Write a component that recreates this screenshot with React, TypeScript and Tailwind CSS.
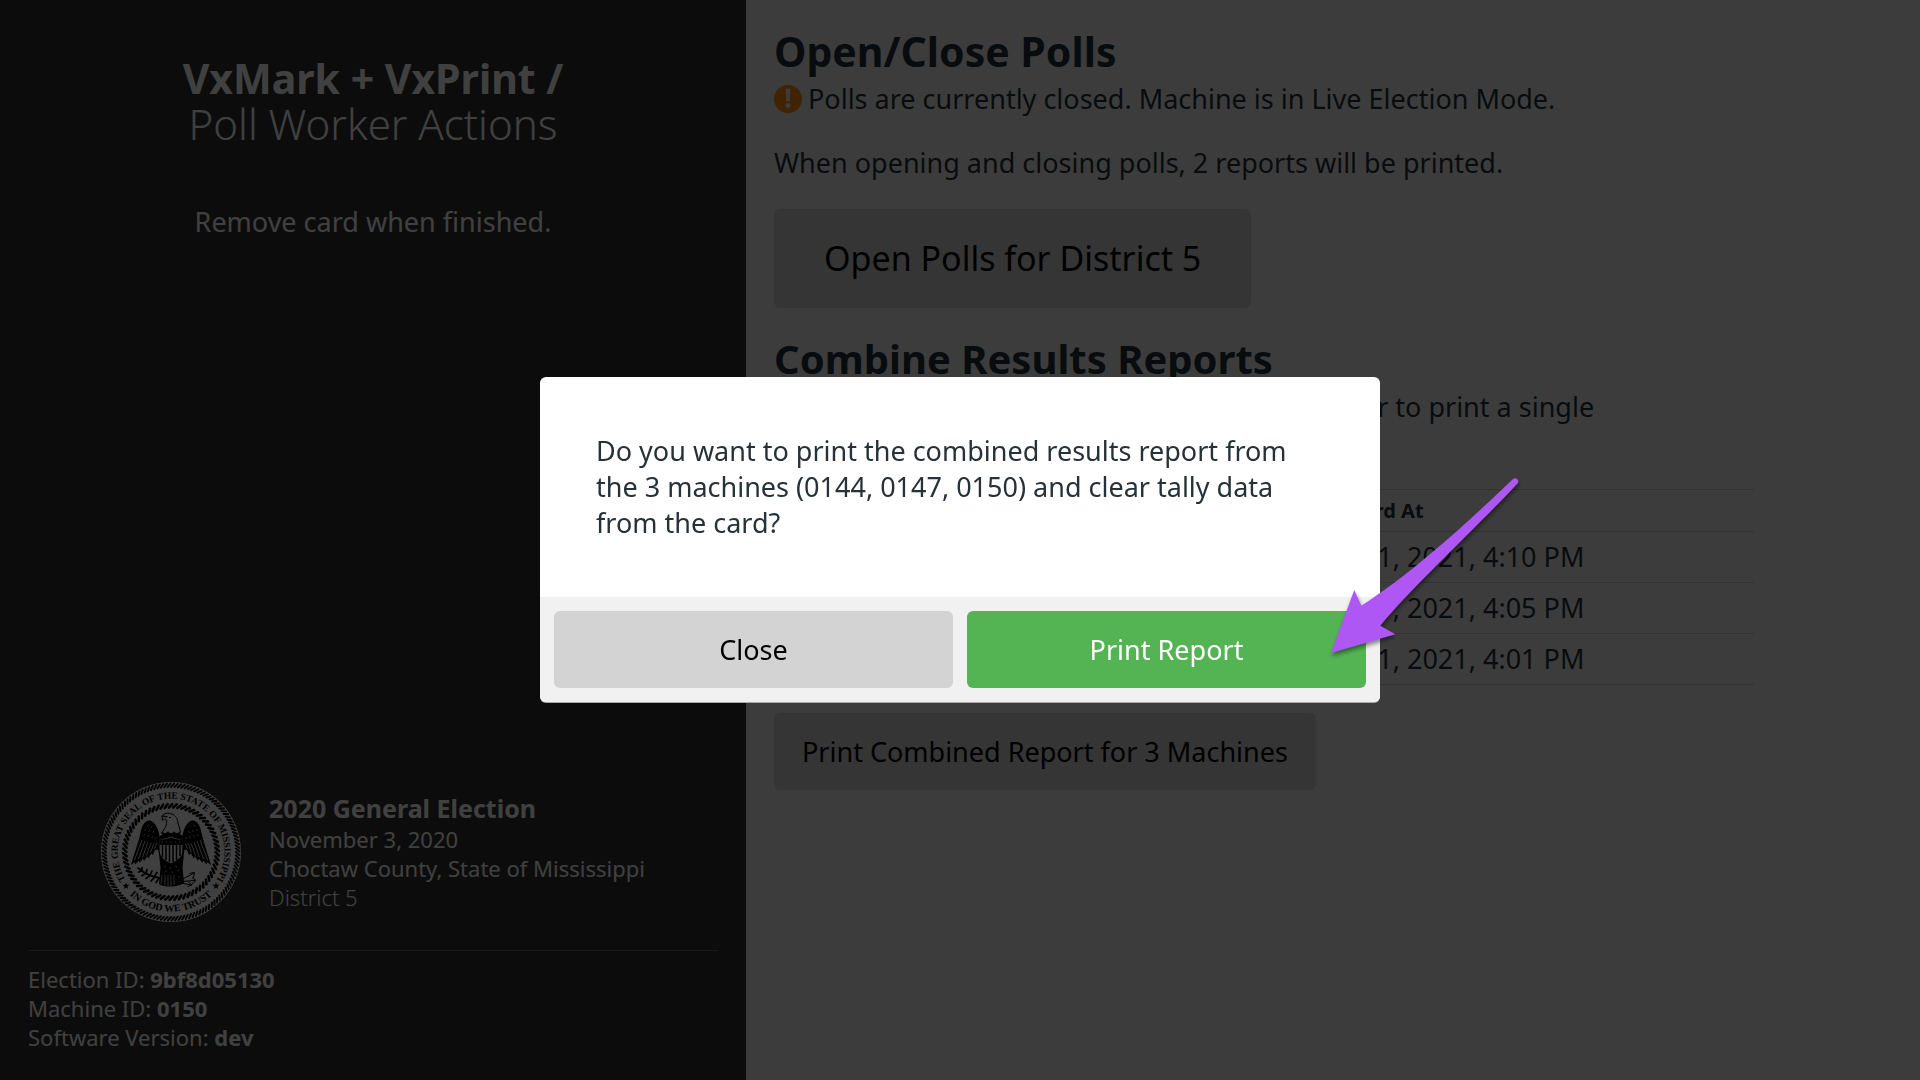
const machines = [
  { id: '0144', savedAt: 'Fri, May 21, 2021, 4:10 PM' },
  { id: '0147', savedAt: 'Fri, May 21, 2021, 4:05 PM' },
  { id: '0150', savedAt: 'Fri, May 21, 2021, 4:01 PM' },
];

function polar(r: number, deg: number) {
  const a = (deg * Math.PI) / 180;
  return [70 + r * Math.cos(a), 70 + r * Math.sin(a)];
}

function Rope({ inner, outer, count, twist, width }: { inner: number; outer: number; count: number; twist: number; width: number }) {
  const d = Array.from({ length: count }, (_, i) => {
    const deg = (i * 360) / count;
    const [x1, y1] = polar(inner, deg);
    const [x2, y2] = polar(outer, deg + twist);
    return `M${x1.toFixed(2)} ${y1.toFixed(2)}L${x2.toFixed(2)} ${y2.toFixed(2)}`;
  }).join('');
  return <path d={d} stroke="#000" strokeWidth={width} strokeLinecap="round" />;
}

function Wing() {
  return (
    <g>
      <path
        d="M59 60C59 50 55 40 49 38.500C44 38 41 43 39.500 51C37 62 33 72 30 83L34 80L34 82.500L38 78.500L38.500 81L42 76.500L43 79L46 74.500L47.500 76.500L50 71.500L52 73L54 68L59 67Z"
        fill="#000"
      />
      <path
        d="M33.500 78L41 58M37.500 77L44 59M41.500 75.500L47 60M45.500 73.500L50 61M49.500 70.500L53 61M53.500 67L56 61"
        stroke="#fff"
        strokeWidth="0.8"
      />
      <path
        d="M42.500 54l1.500-2M46.500 55l1.500-2M50.500 56l1.500-2M54 57l1.500-2M43.500 49l1.500-2M47.500 50l1.500-2M51.500 51l1.500-2M46 44.500l1.500-2M50 45.500l1.500-2"
        stroke="#aaa"
        strokeWidth="0.9"
      />
    </g>
  );
}

function Star({ x, y }: { x: number; y: number }) {
  return (
    <path
      transform={`translate(${x} ${y})`}
      d="M0-3.8L.9-1.2H3.6L1.4.4 2.2 3 0 1.4-2.2 3-1.4.4-3.6-1.2H-.9z"
      fill="#000"
    />
  );
}

function StateSeal() {
  return (
    <svg viewBox="0 0 140 140" className="size-[140px] shrink-0" fill="none" role="img" aria-label="Seal of the State of Mississippi">
      <defs>
        <path id="seal-top" d="M28.600 103.500A53.300 53.300 0 1 1 111.400 103.500" />
        <path id="seal-bottom" d="M18 99.500A60 60 0 0 0 122 99.500" />
      </defs>
      <circle cx="70" cy="70" r="70" fill="#fff" />
      <Rope inner={65} outer={68.5} count={120} twist={2.6} width={1.9} />
      <Rope inner={44.5} outer={48} count={66} twist={4.2} width={2.5} />
      <g fontFamily="'Liberation Serif', serif" fontWeight="700" fill="#000" textAnchor="middle">
        <text fontSize="9.5">
          <textPath href="#seal-top" startOffset="50%">THE GREAT SEAL OF THE STATE OF MISSISSIPPI</textPath>
        </text>
        <text fontSize="10">
          <textPath href="#seal-bottom" startOffset="50%">IN GOD WE TRUST</textPath>
        </text>
      </g>
      <Star x={25} y={104} />
      <Star x={115} y={104} />

      <Wing />
      <g transform="matrix(-1 0 0 1 140 0)">
        <Wing />
      </g>
      {/* head and neck */}
      <path
        d="M61 34C63 31 67 30.500 71 32C75 33.500 76.500 37 77 41L79.500 50L76 54H63L60.500 51C63.500 47 66.500 43 65.500 38C64.500 36.500 62.500 37 61.500 38.500Z"
        fill="#fff"
        stroke="#000"
        strokeWidth="1"
      />
      <path d="M61 34.500C63 33.500 65 34.500 66.500 35M68 35.500h2M61 50l3 3 3-3 3 3 3-3 3 3 3-3" stroke="#000" strokeWidth="1.1" />
      {/* body, tail and legs */}
      <path d="M59 54l5-3h13l5 3 2 8-2.500 24 1.500 15c-5 4-19 5-25 1l1.500-16-2.500-24z" fill="#000" />
      <path d="M61 93l-1 9M64 92.500v11M67 93v11M70 93v11M73 93v10" stroke="#bbb" strokeWidth="0.9" />
      <path d="M63 84l2 1M68 85.500l2 1M74 84l2 1M64 89l2 1M70 89.500l2 1M76 88l2 1M77 94l2 1M77 99l1 1" stroke="#aaa" strokeWidth="0.9" />
      {/* shield */}
      <path d="M58 56c4 1 8 0 12-2 4 2 8 3 12 2v13c0 6-5 10-12 13-7-3-12-7-12-13z" fill="#fff" stroke="#000" strokeWidth="1.2" />
      <path d="M58.500 57c4 1 8 0 11.500-1.500 3.500 1.500 7.500 2.500 11.500 1.500v6h-23z" fill="#000" />
      <path d="M61 60h1M65 60h1M69.500 60h1M74 60h1M78 60h1" stroke="#fff" strokeWidth="0.9" />
      <path d="M61.500 63v12M65 63v15M68.500 63v17M72 63v17M75.500 63v15M79 63v11" stroke="#000" strokeWidth="1.5" />
      {/* olive branch */}
      <path
        d="M37 86c6 5 13 9 22 10M41 89l0-3.500M45 91.500l1-4M49 93.500l2-4.500M53 95l3-4.500M41 89l-3.500 1M45 91.500l-4 2M49 93.500l-4 3M54 95l-4 4M58 96.500l-3 4"
        stroke="#000"
        strokeWidth="1.7"
        strokeLinecap="round"
      />
      {/* arrows */}
      <path
        d="M80 98l13-7M80 99.500l14-1M80 101l10 2M88.500 91.500l5-1-1 5M91 95.500l4 3-4 3.500M87 99.500l4 3.500-4.500 1.500"
        stroke="#000"
        strokeWidth="1"
      />
    </svg>
  );
}

function WarningIcon() {
  return (
    <svg viewBox="0 0 512 512" className="size-7 shrink-0" aria-hidden="true">
      <path
        fill="#ff8c00"
        fillRule="evenodd"
        d="M256 0a256 256 0 1 0 0 512a256 256 0 1 0 0-512zM212 82a14 14 0 0 1 14-15h60a14 14 0 0 1 14 15l-9 206a14 14 0 0 1-14 13h-42a14 14 0 0 1-14-13zM256 328a46 46 0 1 1 0 92a46 46 0 1 1 0-92z"
      />
    </svg>
  );
}

function PointerArrow() {
  return (
    <svg
      viewBox="0 0 200 184"
      className="pointer-events-none absolute top-24 left-[786px] h-[184px] w-[200px] drop-shadow-[1px_3px_2px_rgba(0,0,0,0.45)]"
      aria-hidden="true"
    >
      <path
        d="M5 180L28.300 117L35.300 132.700C85 101 139 52 187 6C190 3.500 194 7 191.500 10.500C157 48 88 112 54.300 152.700L69.300 161.300Z"
        fill="#ae57f4"
      />
    </svg>
  );
}

function Sidebar() {
  return (
    <aside className="flex flex-col justify-between bg-[#333] px-7 pb-7 text-white">
      <header className="pt-[55px] text-center">
        <h1 className="leading-[46px]">
          <span className="block text-[41px] font-bold">VxMark + VxPrint /</span>
          <span className="block text-[42px] font-light">Poll Worker Actions</span>
        </h1>
        <p className="mt-[57px]">Remove card when finished.</p>
      </header>
      <footer>
        <div className="flex items-center justify-center gap-7 pb-7">
          <StateSeal />
          <div className="pb-0.5 text-[22px] leading-[29px]">
            <h2 className="text-[25px] leading-[34px] font-bold">2020 General Election</h2>
            <p>November 3, 2020</p>
            <p>Choctaw County, State of Mississippi</p>
            <p className="font-light">District 5</p>
          </div>
        </div>
        <div className="border-t border-[#666] pt-3.5 text-[22px] leading-[29px]">
          <p>Election ID: <strong>9bf8d05130</strong></p>
          <p>Machine ID: <strong>0150</strong></p>
          <p>Software Version: <strong>dev</strong></p>
        </div>
      </footer>
    </aside>
  );
}

function PollsPanel() {
  return (
    <main className="bg-[#f0f0f0] p-7 text-[#263238]">
      <section>
        <h2 className="mb-[7px] text-[41px] leading-[46px] font-bold">Open/Close Polls</h2>
        <p className="flex items-center gap-1.5">
          <WarningIcon />
          Polls are currently closed. Machine is in Live Election Mode.
        </p>
        <p className="mt-7">When opening and closing polls, 2 reports will be printed.</p>
        <button type="button" className="mt-7 rounded-md bg-[#d3d3d3] px-[50px] py-7 text-[34px] leading-[43px] text-black">
          Open Polls for District 5
        </button>
      </section>
      <section className="mt-7 max-w-[980px]">
        <h2 className="mb-[7px] text-[40px] leading-[46px] font-bold">Combine Results Reports</h2>
        <p>
          Combine the reports stored on this card in order to print a single
          <br />
          report.
        </p>
        <table className="mt-7 w-full border-collapse text-left">
          <thead>
            <tr className="border-y border-[#c6c6c6] text-[20px] leading-[29px]">
              <th scope="col" className="w-[475px] px-1.5 py-1.5">Machine ID</th>
              <th scope="col" className="px-1.5 py-1.5">Saved on Card At</th>
            </tr>
          </thead>
          <tbody>
            {machines.map((m) => (
              <tr key={m.id} className="border-b border-[#c6c6c6]">
                <td className="px-1.5 py-[7px]">{m.id}</td>
                <td className="px-1.5 py-[7px]">{m.savedAt}</td>
              </tr>
            ))}
          </tbody>
        </table>
        <button type="button" className="mt-7 rounded-md bg-[#d3d3d3] px-7 py-5 leading-[37px] text-black">
          Print Combined Report for 3 Machines
        </button>
      </section>
    </main>
  );
}

function ConfirmDialog() {
  return (
    <div className="fixed inset-0 flex items-center justify-center bg-black/75">
      <div role="dialog" aria-modal="true" aria-describedby="confirm-text" className="relative w-[840px] max-w-full pb-px">
        <div className="overflow-hidden rounded-md bg-white shadow-[0_1px_0_#a9a9a9]">
          <p id="confirm-text" className="p-14 text-[#263238]">
            Do you want to print the combined results report from the 3 machines (0144, 0147, 0150) and clear tally data from the card?
          </p>
          <div className="grid grid-cols-2 gap-3.5 bg-[#f1f1f1] p-3.5">
            <button type="button" className="rounded-md bg-[#d3d3d3] py-5 leading-[37px] text-black">Close</button>
            <button type="button" className="rounded-md bg-[#54b454] py-5 leading-[37px] text-white">Print Report</button>
          </div>
        </div>
        <PointerArrow />
      </div>
    </div>
  );
}

export default function App() {
  return (
    <div className="grid min-h-screen grid-cols-[373fr_587fr] font-['Noto_Sans',sans-serif] text-[27px] leading-[36px]">
      <Sidebar />
      <PollsPanel />
      <ConfirmDialog />
    </div>
  );
}
